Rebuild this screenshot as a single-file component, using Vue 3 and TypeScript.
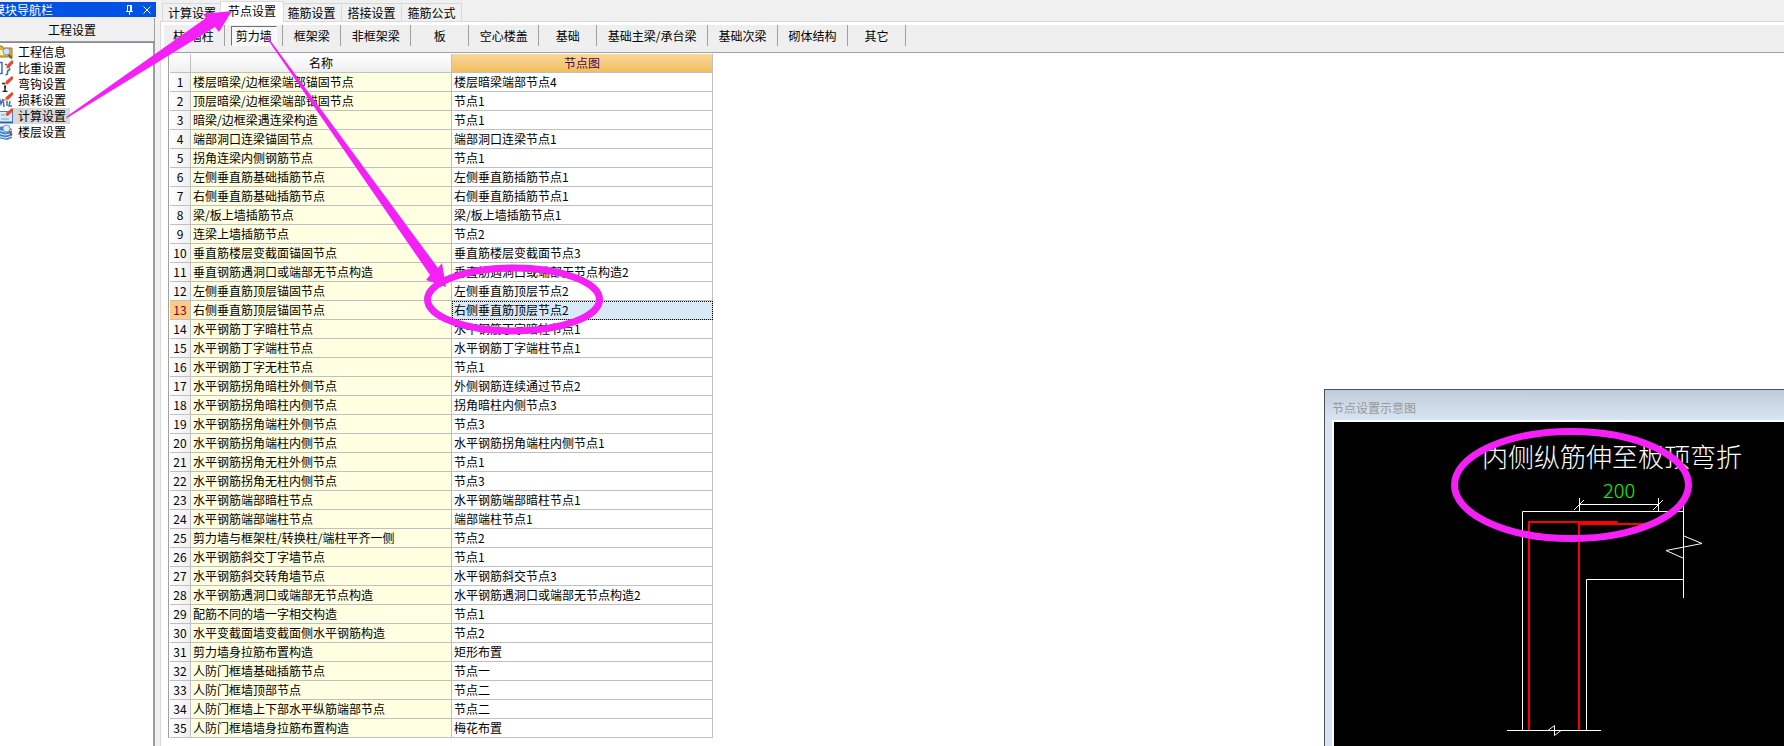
<script setup lang="ts">
import { ref } from 'vue'

type IconKind = 'info' | 'weight' | 'hook' | 'loss' | 'calc' | 'floor'

const navItems: { label: string; icon: IconKind }[] = [
  { label: '工程信息', icon: 'info' },
  { label: '比重设置', icon: 'weight' },
  { label: '弯钩设置', icon: 'hook' },
  { label: '损耗设置', icon: 'loss' },
  { label: '计算设置', icon: 'calc' },
  { label: '楼层设置', icon: 'floor' },
]
const tabs = ['计算设置', '节点设置', '箍筋设置', '搭接设置', '箍筋公式']
const members = [
  '柱/墙柱', '剪力墙', '框架梁', '非框架梁', '板', '空心楼盖', '基础',
  '基础主梁/承台梁', '基础次梁', '砌体结构', '其它',
]
const rows: [string, string][] = [
  ['楼层暗梁/边框梁端部锚固节点', '楼层暗梁端部节点4'],
  ['顶层暗梁/边框梁端部锚固节点', '节点1'],
  ['暗梁/边框梁遇连梁构造', '节点1'],
  ['端部洞口连梁锚固节点', '端部洞口连梁节点1'],
  ['拐角连梁内侧钢筋节点', '节点1'],
  ['左侧垂直筋基础插筋节点', '左侧垂直筋插筋节点1'],
  ['右侧垂直筋基础插筋节点', '右侧垂直筋插筋节点1'],
  ['梁/板上墙插筋节点', '梁/板上墙插筋节点1'],
  ['连梁上墙插筋节点', '节点2'],
  ['垂直筋楼层变截面锚固节点', '垂直筋楼层变截面节点3'],
  ['垂直钢筋遇洞口或端部无节点构造', '垂直筋遇洞口或端部无节点构造2'],
  ['左侧垂直筋顶层锚固节点', '左侧垂直筋顶层节点2'],
  ['右侧垂直筋顶层锚固节点', '右侧垂直筋顶层节点2'],
  ['水平钢筋丁字暗柱节点', '水平钢筋丁字暗柱节点1'],
  ['水平钢筋丁字端柱节点', '水平钢筋丁字端柱节点1'],
  ['水平钢筋丁字无柱节点', '节点1'],
  ['水平钢筋拐角暗柱外侧节点', '外侧钢筋连续通过节点2'],
  ['水平钢筋拐角暗柱内侧节点', '拐角暗柱内侧节点3'],
  ['水平钢筋拐角端柱外侧节点', '节点3'],
  ['水平钢筋拐角端柱内侧节点', '水平钢筋拐角端柱内侧节点1'],
  ['水平钢筋拐角无柱外侧节点', '节点1'],
  ['水平钢筋拐角无柱内侧节点', '节点3'],
  ['水平钢筋端部暗柱节点', '水平钢筋端部暗柱节点1'],
  ['水平钢筋端部端柱节点', '端部端柱节点1'],
  ['剪力墙与框架柱/转换柱/端柱平齐一侧', '节点2'],
  ['水平钢筋斜交丁字墙节点', '节点1'],
  ['水平钢筋斜交转角墙节点', '水平钢筋斜交节点3'],
  ['水平钢筋遇洞口或端部无节点构造', '水平钢筋遇洞口或端部无节点构造2'],
  ['配筋不同的墙一字相交构造', '节点1'],
  ['水平变截面墙变截面侧水平钢筋构造', '节点2'],
  ['剪力墙身拉筋布置构造', '矩形布置'],
  ['人防门框墙基础插筋节点', '节点一'],
  ['人防门框墙顶部节点', '节点二'],
  ['人防门框墙上下部水平纵筋端部节点', '节点二'],
  ['人防门框墙墙身拉筋布置构造', '梅花布置'],
]

const activeNav = ref(4)
const activeTab = ref(1)
const activeMember = ref(1)
const activeRow = ref(12)
</script>

<template>
  <div class="app">
    <aside class="sidebar">
      <div class="dock">
        <header class="dock-title">
          <span class="dock-name">模块导航栏</span>
          <button class="dock-button" type="button" aria-label="固定">
            <svg width="9" height="10" viewBox="0 0 9 10" shape-rendering="crispEdges">
              <path d="M2 .5h5M2.500 0v6M5.500 0v6M6.500 0v6M1 6.500h7M4.500 6v4" fill="none" stroke="#fff" />
            </svg>
          </button>
          <button class="dock-button" type="button" aria-label="关闭">
            <svg width="8" height="8" viewBox="0 0 8 8">
              <path d="M.5.5l7 7M7.500.5l-7 7" stroke="#fff" />
            </svg>
          </button>
        </header>
        <button class="group" type="button">工程设置</button>
        <nav class="nav">
          <button
            v-for="(item, i) in navItems"
            :key="item.label"
            type="button"
            class="nav-item"
            @click="activeNav = i"
          >
            <svg class="nav-icon" width="16" height="16" viewBox="0 0 16 16">
              <template v-if="item.icon === 'info'">
                <path d="M0 2h5l1 2h9v9H0z" fill="#e0b040" stroke="#a87a18" />
                <path d="M2 6h5v5H2z" fill="#fff2b8" />
                <path d="M11.500 10.500l3.500 4" stroke="#8a5a20" stroke-width="2" />
                <circle cx="9.500" cy="7.500" r="3.500" fill="#cfe6fa" stroke="#7d8fa0" />
              </template>
              <template v-else-if="item.icon === 'weight'">
                <path d="M2 2.500h3v11H2M12.500 8v2l-2 1v3l-2 1M8 4.500h2" fill="none" stroke="#3e6fb5" stroke-width="1.500" />
                <path d="M9 9l1-4 5-5 2 2-5 6z" fill="#e8482a" />
                <path d="M8 10l1-3 2 1.500z" fill="#f6d9b0" />
              </template>
              <template v-else-if="item.icon === 'hook'">
                <path d="M5 7.500h3V15M5.500 15.500h5M7 11h2" fill="none" stroke="#222" stroke-width="1.500" />
                <path d="M8 9l1-4 6-5 2 2-6 6z" fill="#e8482a" />
                <path d="M7 10l1-3 2 1.500z" fill="#f6d9b0" />
              </template>
              <template v-else-if="item.icon === 'loss'">
                <path d="M2 5l2 7 2-5 1 8M10 9v5M13 9l-1 5h3" fill="none" stroke="#3e6fb5" stroke-width="1.500" />
                <path d="M8 8l1-3 6-5 2 2-6 6z" fill="#e8482a" />
                <path d="M6 10l2-4 3 2z" fill="#f0a080" />
              </template>
              <template v-else-if="item.icon === 'calc'">
                <rect x=".5" y="3.500" width="15" height="11" fill="#dcebfb" stroke="#4a7fc6" />
                <path d="M1 14.500h15" stroke="#2f62aa" stroke-width="2" />
                <path d="M4 7h4M4 11h8" stroke="#6c9bd4" />
                <path d="M8 8l1-3 6-5 2 2-6 6z" fill="#e8482a" />
                <path d="M7 9l1-3 2 2z" fill="#f6d9b0" />
              </template>
              <template v-else>
                <path d="M0 3l8-1 7 3v9l-5 2-10-2z" fill="#3f83cc" />
                <path d="M0 6l9 2 6-2M0 9l9 2 6-2M0 12l9 2 6-2" fill="none" stroke="#e5f1fc" />
                <path d="M12 7l3 4" stroke="#8a5a20" stroke-width="2" />
                <circle cx="9.500" cy="4.500" r="3.500" fill="#dcecf8" stroke="#8494a4" />
              </template>
            </svg>
            <span class="nav-label" :class="{ selected: i === activeNav }">{{ item.label }}</span>
          </button>
        </nav>
      </div>
    </aside>

    <main class="main">
      <div class="tabs" role="tablist">
        <button
          v-for="(tab, i) in tabs"
          :key="tab"
          type="button"
          role="tab"
          class="tab"
          :class="{ active: i === activeTab }"
          :aria-selected="i === activeTab"
          @click="activeTab = i"
        >{{ tab }}</button>
      </div>
      <section class="panel">
        <div class="toolbar">
          <div v-for="(member, i) in members" :key="member" class="tool-cell">
            <button
              type="button"
              class="tool"
              :class="{ pressed: i === activeMember }"
              @click="activeMember = i"
            >{{ member }}</button>
          </div>
        </div>
        <div class="grid-area">
          <table class="grid">
            <colgroup>
              <col class="col-index" />
              <col class="col-text" />
              <col class="col-text" />
            </colgroup>
            <thead>
              <tr>
                <th></th>
                <th>名称</th>
                <th class="current">节点图</th>
              </tr>
            </thead>
            <tbody>
              <tr
                v-for="(row, i) in rows"
                :key="i"
                :class="{ current: i === activeRow }"
                @click="activeRow = i"
              >
                <th scope="row">{{ i + 1 }}</th>
                <td class="name">{{ row[0] }}</td>
                <td class="node">{{ row[1] }}</td>
              </tr>
            </tbody>
          </table>
        </div>
      </section>
    </main>

    <section class="preview">
      <h2 class="preview-title">节点设置示意图</h2>
      <div class="canvas">
        <svg class="drawing" width="450" height="324" viewBox="0 0 450 324">
          <text class="caption" x="148" y="45">内侧纵筋伸至板顶弯折</text>
          <text class="dimension" x="269" y="76">200</text>
          <g fill="none" stroke="#fff">
            <path d="M245.500 76v13M324.500 76v13M245 82.500h79M240 88l10-10M319 88l10-10" />
            <path d="M188.500 309V89.500H349M349.500 83v93M252.500 309V157.500H349" />
            <path d="M350 114l18 7.500-36 7 18 8" />
            <path d="M173 308.500h94M214 308.500l6.500-5v10l6.500-5" />
          </g>
          <g fill="none" stroke="#f00" stroke-width="2">
            <path d="M195 308V100h88" />
            <path d="M245 308V102h66" />
          </g>
          <ellipse class="ring" cx="237.500" cy="63" rx="117" ry="53.500" />
        </svg>
      </div>
    </section>

    <svg class="marks" width="620" height="350" viewBox="0 0 620 350" aria-hidden="true">
      <path class="arrow" d="M66 117L206 18l-3-4 29-3-13 21-4-5L67 118z" />
      <path class="arrow" d="M266 37l164 238-4 5 20 7-4-24-4 5L267 36z" />
      <ellipse class="ring" cx="513.500" cy="299.500" rx="86" ry="31.500" />
    </svg>
  </div>
</template>

<style>
body {
  margin: 0;
}
</style>

<style scoped>
.app {
  position: relative;
  display: flex;
  min-height: 100vh;
  overflow: hidden;
  background: #f0f0f0;
  color: #000;
  font: 12px/16px "Noto Sans CJK SC", "Liberation Sans", sans-serif;
}

.app *,
.app *::before {
  box-sizing: border-box;
}

button {
  margin: 0;
  padding: 0;
  border: 0;
  background: none;
  color: inherit;
  font: inherit;
  white-space: nowrap;
}

.sidebar {
  flex: none;
  width: 160px;
  padding: 2px 4px 0 0;
  overflow: hidden;
}

.dock {
  display: flex;
  flex-direction: column;
  height: 100%;
  margin-left: -10px;
}

.dock-title {
  display: flex;
  align-items: center;
  height: 15px;
  padding-left: 3px;
  background: #0052e6;
  color: #fff;
}

.dock-name {
  flex: 1;
  line-height: 15px;
}

.dock-button {
  display: flex;
  align-items: center;
  justify-content: center;
  width: 18px;
  height: 15px;
}

.group {
  height: 24px;
  margin: 1px 1px 0 0;
  border-right: 1px solid #a0a0a0;
  border-bottom: 1px solid #a0a0a0;
}

.nav {
  flex: 1;
  margin-right: 1px;
  padding: 1px 0 0 7px;
  border-top: 1px solid #828790;
  border-right: 2px solid #9c9ca8;
  background: #fff;
}

.nav-item {
  display: flex;
  width: 100%;
  height: 16px;
}

.nav-icon {
  flex: none;
}

.nav-label {
  padding: 0 4px 0 5px;
}

.nav-label.selected {
  background: #d9d9d9;
}

.main {
  flex: 1;
  display: flex;
  flex-direction: column;
  min-width: 0;
}

.tabs {
  display: flex;
  align-items: flex-end;
  height: 22px;
  padding: 0 2px;
  border-bottom: 1px solid #d9d9d9;
}

.tab {
  width: 60px;
  height: 18px;
  border: 1px solid #d9d9d9;
  border-bottom: 0;
  border-left-width: 0;
}

.tab:first-child {
  border-left-width: 1px;
}

.tab.active {
  width: 64px;
  height: 21px;
  margin: 0 -2px -1px;
  padding-bottom: 3px;
  border-left-width: 1px;
  background: #fff;
}

.panel {
  flex: 1;
  padding: 3px 0 0 3px;
  border-left: 1px solid #d9d9d9;
  background: #fff;
}

.toolbar {
  display: flex;
  height: 27px;
  background: #efefef;
}

.tool-cell {
  display: flex;
  align-items: center;
  justify-content: center;
  min-width: 58px;
  height: 21px;
  padding: 0 5px 0 6px;
  border-right: 1px solid #a0a0a0;
}

.tool-cell:first-child {
  padding-left: 4px;
}

.tool {
  height: 20px;
  padding: 0 4px;
  border: 1px solid transparent;
}

.tool.pressed {
  border-color: #707070 #fff #fff #707070;
  background: #f8f8f8;
}

.grid-area {
  margin-left: 4px;
  padding: 1px 0 0 1px;
  border-top: 1px solid #a0a0a8;
  border-left: 1px solid #a0a0a8;
}

.grid {
  width: 543px;
  table-layout: fixed;
  border-spacing: 0;
}

.col-index {
  width: 21px;
}

.col-text {
  width: 261px;
}

.grid th,
.grid td {
  height: 19px;
  padding: 0;
  border-right: 1px solid #c0c0c0;
  border-bottom: 1px solid #c0c0c0;
  line-height: 18px;
  font-weight: 400;
  white-space: nowrap;
}

.grid th {
  background: linear-gradient(#fff, #efefef);
  text-align: center;
}

.grid tbody th {
  background: linear-gradient(90deg, #fff, #efefef);
}

.grid thead th.current {
  background: linear-gradient(#f8d899, #f1be60);
  color: #500058;
}

.grid td {
  padding-left: 2px;
}

.grid .name {
  background: #ffffe1;
}

.grid tbody tr.current th {
  background: #fecb82;
  color: #700040;
}

.grid tr.current .node {
  background: #d8e9f8;
  outline: 1px dotted #000;
  outline-offset: -1px;
}

.preview {
  position: absolute;
  right: 0;
  bottom: 0;
  display: flex;
  flex-direction: column;
  width: 460px;
  height: 357px;
  padding-left: 7px;
  border-top: 1px solid #505058;
  border-left: 1px solid #505058;
  background: linear-gradient(#bfcddb, #d8e4f1 30px);
}

.preview-title {
  height: 30px;
  margin: 0;
  padding-top: 10px;
  color: #989898;
  font: inherit;
}

.canvas {
  flex: 1;
  border-top: 2px solid #fff;
  border-left: 2px solid #fff;
  background: #000;
  overflow: hidden;
}

.drawing {
  display: block;
}

.caption {
  fill: #fff;
  font-size: 26px;
  font-weight: 300;
}

.dimension {
  fill: #0f0;
  font-size: 20px;
  font-weight: 300;
}

.marks {
  position: absolute;
  top: 0;
  left: 0;
  pointer-events: none;
}

.arrow {
  fill: #f520f5;
}

.ring {
  fill: none;
  stroke: #f520f5;
  stroke-width: 7;
}
</style>
